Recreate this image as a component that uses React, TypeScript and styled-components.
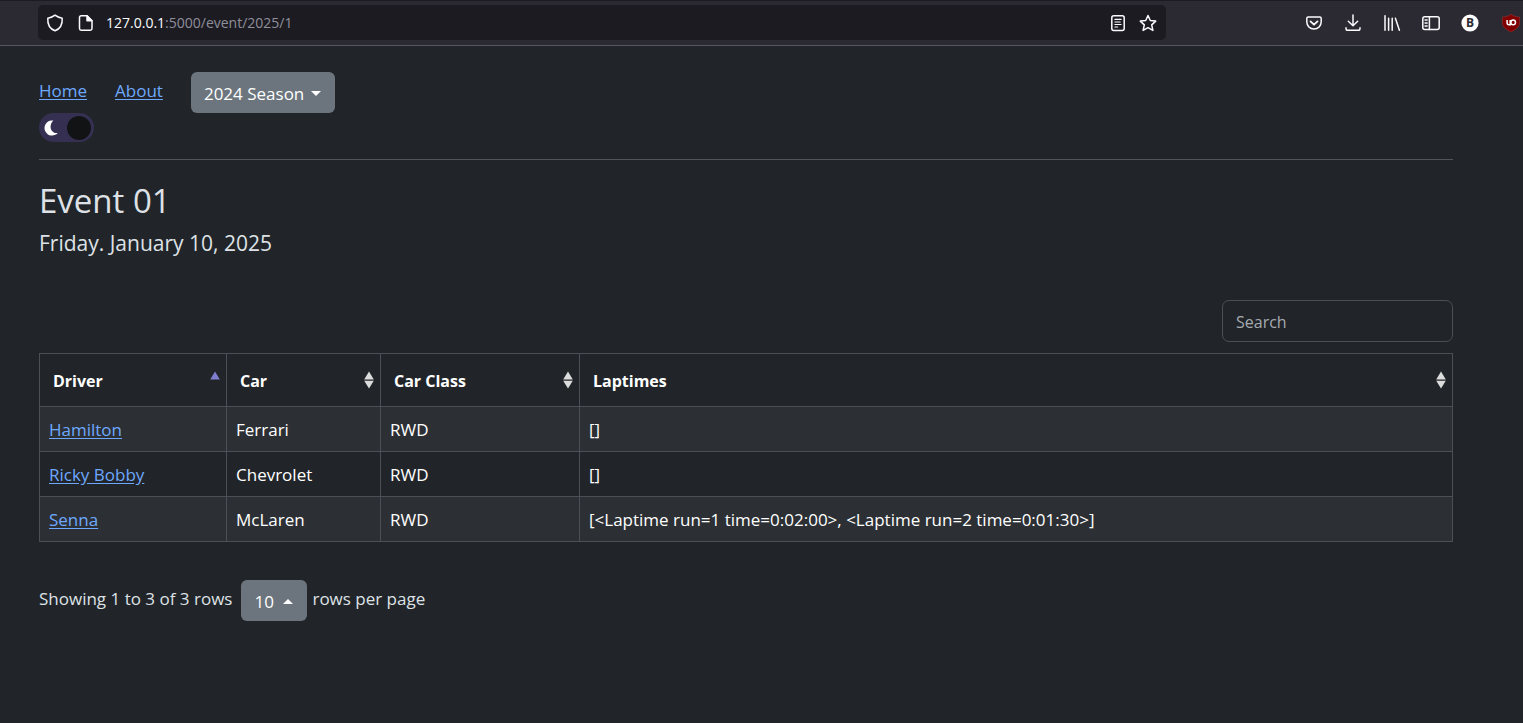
import React, { useState } from "react";
import styled, { createGlobalStyle } from "styled-components";

const GlobalStyle = createGlobalStyle`
  *, *::before, *::after { box-sizing: border-box; }
  body {
    margin: 0;
    background: #212529;
    color: #dee2e6;
    font-family: "Segoe UI", "Open Sans", "Noto Sans", sans-serif;
    font-size: 17px;
    line-height: 26px;
  }
`;

/* Browser toolbar */

const Toolbar = styled.header`
  display: flex;
  align-items: center;
  height: 46px;
  padding: 0 0 1px 38px;
  background: #2b2a33;
  border-top: 1px solid #1c1b22;
  border-bottom: 1px solid #56555e;
  overflow: hidden;
`;

const AddressBar = styled.div`
  display: flex;
  align-items: center;
  flex: 1;
  gap: 12px;
  height: 35px;
  padding: 0 9px 0 8px;
  background: #1c1b22;
  border-radius: 5px;
`;

const Address = styled.input`
  position: absolute;
  inset: 0;
  width: 100%;
  border: 0;
  padding: 0;
  background: transparent;
  color: transparent;
  font: inherit;
`;

const AddressField = styled.label`
  position: relative;
  flex: 1;
  color: #8f8f9a;
  font-size: 14px;
  line-height: 20px;
`;

const Host = styled.span`
  color: #fbfbfe;
`;

const IconButton = styled.button`
  display: flex;
  padding: 0;
  border: 0;
  background: none;
  color: #fbfbfe;
`;

const Actions = styled.div`
  display: flex;
  flex: none;
  gap: 21px;
  margin: 0 1px 0 139px;
`;

/* Page */

const Page = styled.main`
  padding: 26px 70px 40px 39px;
`;

const Nav = styled.nav`
  display: flex;
  align-items: flex-start;
  gap: 28px;
  line-height: 38px;
`;

const Link = styled.a`
  color: #6ea8fe;
  text-decoration: underline;
  text-underline-offset: 2px;
`;

const Picker = styled.span<{ $width: number }>`
  display: inline-grid;
  align-items: center;
  width: ${(p) => p.$width}px;
`;

const Select = styled.select`
  grid-area: 1 / 1;
  width: 100%;
  height: 41px;
  padding: 3px 13px 0;
  appearance: none;
  border: 0;
  border-radius: 6px;
  background: #6c757d;
  color: #fff;
  font: inherit;
`;

const Caret = styled.span<{ $up?: boolean }>`
  grid-area: 1 / 1;
  justify-self: end;
  margin: 2px 14px 0 0;
  border: 5px solid transparent;
  border-width: ${(p) => (p.$up ? "0 5px 5px" : "5px 5px 0")};
  border-color: ${(p) => (p.$up ? "transparent transparent #fff" : "#fff transparent transparent")};
  pointer-events: none;
`;

const ThemeSwitch = styled.label`
  display: grid;
  align-items: center;
  width: 55px;
  height: 29px;
  border-radius: 15px;
  background: #353052;
`;

const ThemeInput = styled.input`
  grid-area: 1 / 1;
  display: flex;
  appearance: none;
  width: 100%;
  height: 100%;
  margin: 0;
  padding: 2px 3px;
  justify-content: flex-start;
  align-items: center;
  &:checked { justify-content: flex-end; }
  &::before {
    content: "";
    width: 24px;
    height: 24px;
    border-radius: 50%;
    background: #111315;
  }
`;

const Moon = styled.svg`
  grid-area: 1 / 1;
  margin-left: 4px;
  pointer-events: none;
`;

const Rule = styled.hr`
  height: 1px;
  margin: 17px 0 20px;
  border: 0;
  background: #515558;
`;

const Title = styled.h1`
  margin: 0;
  font-size: 33px;
  font-weight: 400;
  line-height: 42px;
`;

const EventDate = styled.h2`
  margin: 8px 0 0;
  font-size: 21px;
  font-weight: 400;
  line-height: 26px;
`;

const TableTools = styled.div`
  display: flex;
  justify-content: flex-end;
  margin: 44px 0 11px;
`;

const Search = styled.input`
  width: 231px;
  height: 42px;
  padding: 2px 13px 0;
  border: 1px solid #495057;
  border-radius: 7px;
  background: #212529;
  color: #dee2e6;
  font: inherit;
  font-size: 16px;
  &::placeholder { color: #a6abb0; opacity: 1; }
`;

const Table = styled.table`
  width: 100%;
  table-layout: fixed;
  border-collapse: collapse;
  color: #fff;
`;

const Th = styled.th<{ $width?: number }>`
  width: ${(p) => (p.$width ? `${p.$width}px` : "auto")};
  height: 53px;
  padding: 0 6px 0 13px;
  border: 1px solid #495057;
  font-size: 16px;
  text-align: left;
`;

const SortButton = styled.button`
  display: flex;
  align-items: center;
  justify-content: space-between;
  width: 100%;
  padding: 2px 0 0;
  border: 0;
  background: none;
  color: inherit;
  font: inherit;
  font-weight: 700;
`;

const SortIcon = styled.svg`
  margin-bottom: 3px;
`;

const Row = styled.tr`
  &:nth-child(odd) { background: #2c3034; }
`;

const Td = styled.td`
  height: 45px;
  padding: 2px 9px 0;
  border: 1px solid #495057;
`;

const Pagination = styled.footer`
  display: flex;
  align-items: flex-start;
  margin-top: 38px;
  line-height: 38px;
`;

const PageSize = styled.label`
  display: flex;
  align-items: flex-start;
  gap: 5px;
  margin-left: 9px;
`;

type IconProps = { children: React.ReactNode };
const Icon = ({ children }: IconProps) => (
  <svg width="18" height="18" viewBox="0 0 18 18" fill="none" stroke="currentColor" strokeWidth="1.5" strokeLinecap="round" strokeLinejoin="round" aria-hidden="true">
    {children}
  </svg>
);

const columns = [
  { name: "Driver", width: 187 },
  { name: "Car", width: 154 },
  { name: "Car Class", width: 199 },
  { name: "Laptimes" },
];

const entries = [
  { driver: "Hamilton", car: "Ferrari", carClass: "RWD", laps: "[]" },
  { driver: "Ricky Bobby", car: "Chevrolet", carClass: "RWD", laps: "[]" },
  { driver: "Senna", car: "McLaren", carClass: "RWD", laps: "[<Laptime run=1 time=0:02:00>, <Laptime run=2 time=0:01:30>]" },
];

function BrowserToolbar() {
  return (
    <Toolbar>
      <AddressBar>
        <IconButton aria-label="Tracking protection">
          <Icon><path d="M9 1.2Q12 3.6 16.2 4.2C16.6 10 14 14.8 9 16.8 4 14.8 1.4 10 1.8 4.2Q6 3.6 9 1.2Z" /></Icon>
        </IconButton>
        <IconButton aria-label="Site information">
          <Icon>
            <path d="M5.2 1.8H11L16 6.8V14.5Q16 16.2 14.3 16.2H5.2Q3.5 16.2 3.5 14.5V3.5Q3.5 1.8 5.2 1.8Z" />
            <path d="M11 1.8V6.8H16Z" fill="currentColor" />
          </Icon>
        </IconButton>
        <AddressField>
          <Host>127.0.0.1</Host>:5000/event/2025/1
          <Address aria-label="Address" />
        </AddressField>
        <IconButton aria-label="Reader view">
          <Icon>
            <rect x="2.8" y="1.8" width="12.4" height="14.6" rx="2" />
            <path d="M5.9 5.4H12.1M5.9 8H11.2M5.9 10.5H12.1M5.9 13H8.6" strokeWidth="1.1" />
          </Icon>
        </IconButton>
        <IconButton aria-label="Bookmark">
          <Icon><path d="M9 1.5 11.3 6.5 16.7 7.1 12.7 10.9 13.9 16.4 9 13.7 4.1 16.4 5.3 10.9 1.3 7.1 6.7 6.5Z" /></Icon>
        </IconButton>
      </AddressBar>
      <Actions>
        <IconButton aria-label="Pocket">
          <Icon>
            <path d="M3.2 3.1H14.8Q16.2 3.1 16.2 4.5V7.8C16.2 12 13.1 15 9 15 4.9 15 1.8 12 1.8 7.8V4.5Q1.8 3.1 3.2 3.1Z" />
            <path d="M5.5 7.4 9 10.7 12.5 7.4" strokeWidth="1.8" />
          </Icon>
        </IconButton>
        <IconButton aria-label="Downloads">
          <Icon><path d="M9 1V11.5M4.3 7.2 9 11.8 13.7 7.2M2 13.8V14.4Q2 16.2 3.8 16.2H14.2Q16 16.2 16 14.4V13.8" /></Icon>
        </IconButton>
        <IconButton aria-label="Library">
          <Icon><path d="M2 1.8V16.2M5.6 4.2V16.2M9.2 4.2V16.2M12.4 4.2 16.4 16.2" /></Icon>
        </IconButton>
        <IconButton aria-label="Sidebars">
          <Icon>
            <rect x="0.8" y="2.8" width="16.4" height="12.8" rx="2" />
            <path d="M7.4 2.8V15.6" />
            <path d="M3 6H5.2M3 9H5.2M3 12H5.2" strokeWidth="1.3" />
          </Icon>
        </IconButton>
        <IconButton aria-label="Account">
          <Icon>
            <circle cx="9" cy="9" r="8.6" fill="#fff" stroke="none" />
            <text x="9" y="13" textAnchor="middle" fill="#2b2a33" stroke="none" fontSize="12" fontWeight="700" fontFamily="Open Sans, sans-serif">B</text>
          </Icon>
        </IconButton>
        <IconButton aria-label="uBlock Origin">
          <svg width="22" height="18" viewBox="-2 0 22 18" aria-hidden="true">
            <path d="M9 .2C11.4 2.1 14.4 3 17.6 3V8.5C17.6 13.3 13.3 16 9 17.9 4.7 16 .4 13.3.4 8.5V3C3.6 3 6.6 2.1 9 .2Z" fill="#800000" stroke="#a33a3d" strokeWidth=".5" />
            <path d="M5.1 6V8.8Q5.1 10.8 7 10.8H8.2V6" fill="none" stroke="#fff" strokeWidth="1.5" />
            <circle cx="11.2" cy="8.4" r="2.3" fill="none" stroke="#fff" strokeWidth="1.5" />
          </svg>
        </IconButton>
      </Actions>
    </Toolbar>
  );
}

export default function App() {
  const [dark, setDark] = useState(true);
  return (
    <>
      <GlobalStyle />
      <BrowserToolbar />
      <Page>
        <Nav>
          <Link href="#home">Home</Link>
          <Link href="#about">About</Link>
          <Picker $width={144}>
            <Select aria-label="Season"><option>2024 Season</option></Select>
            <Caret />
          </Picker>
        </Nav>
        <ThemeSwitch>
          <ThemeInput type="checkbox" aria-label="Dark theme" checked={dark} onChange={(e) => setDark(e.target.checked)} />
          <Moon width="16" height="16" viewBox="0 0 16 16" aria-hidden="true">
            <path d="M8.6.4A7.6 7.6 0 1 0 14.8 13C10.6 13.6 7.8 10.6 7.6 7.2 7.5 4.4 8.6 2.2 10.4.6Z" fill="#fff" />
          </Moon>
        </ThemeSwitch>
        <Rule />
        <Title>Event 01</Title>
        <EventDate>Friday. January 10, 2025</EventDate>
        <TableTools>
          <Search type="search" placeholder="Search" aria-label="Search" />
        </TableTools>
        <Table>
          <thead>
            <tr>
              {columns.map((c, i) => (
                <Th key={c.name} $width={c.width} scope="col" aria-sort={i === 0 ? "ascending" : "none"}>
                  <SortButton>
                    {c.name}
                    <SortIcon width="10" height="18" viewBox="0 0 10 18" aria-hidden="true">
                      <path d="M5 .5 9.8 8.5H.2Z" fill={i === 0 ? "#7f7fd0" : "#dcdcdc"} />
                      {i > 0 && <path d="M5 17.5 9.8 9.8H.2Z" fill="#dcdcdc" />}
                    </SortIcon>
                  </SortButton>
                </Th>
              ))}
            </tr>
          </thead>
          <tbody>
            {entries.map((e) => (
              <Row key={e.driver}>
                <Td><Link href="#driver">{e.driver}</Link></Td>
                <Td>{e.car}</Td>
                <Td>{e.carClass}</Td>
                <Td>{e.laps}</Td>
              </Row>
            ))}
          </tbody>
        </Table>
        <Pagination>
          <span>Showing 1 to 3 of 3 rows</span>
          <PageSize>
            <Picker $width={66}>
              <Select><option>10</option></Select>
              <Caret $up />
            </Picker>
            rows per page
          </PageSize>
        </Pagination>
      </Page>
    </>
  );
}
